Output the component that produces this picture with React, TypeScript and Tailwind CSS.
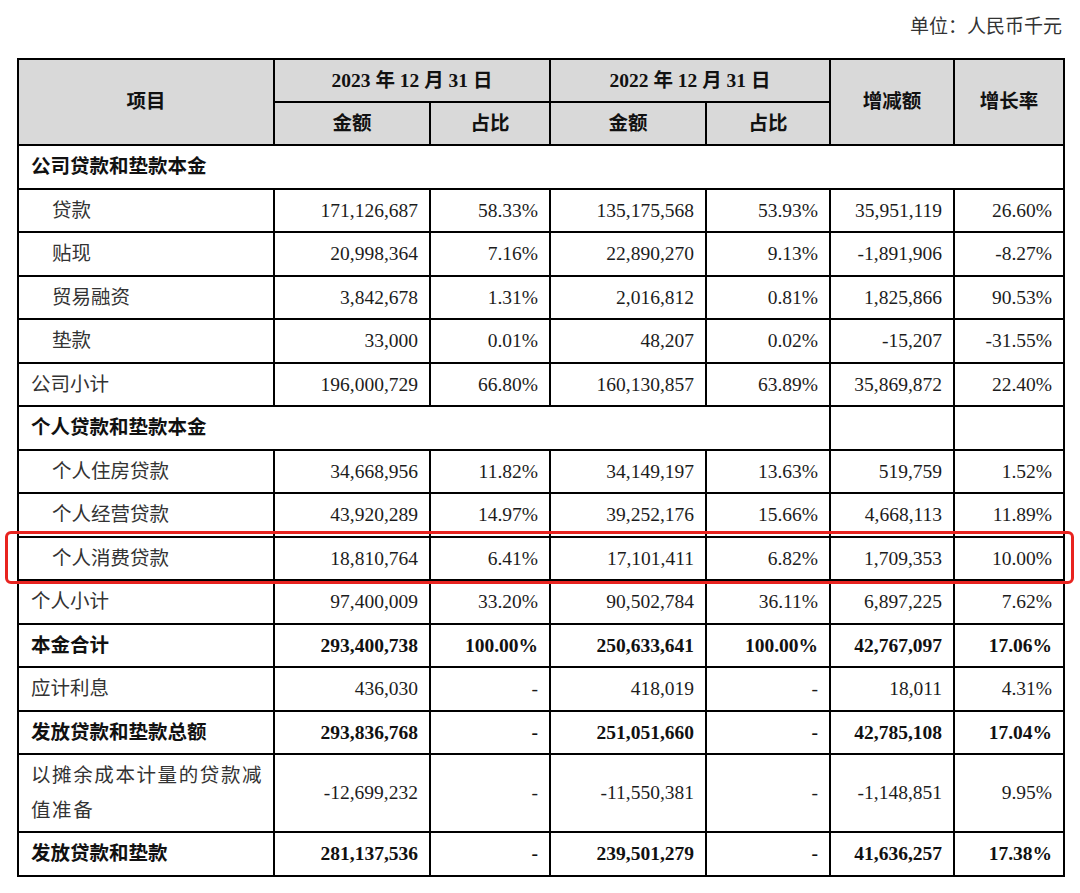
type Row = {
  label: string;
  values?: string[];
  indent?: boolean;
  bold?: boolean;
  boldLabel?: boolean;
  section?: "full" | "split";
  tall?: boolean;
};

const rows: Row[] = [
  { label: "公司贷款和垫款本金", boldLabel: true, section: "full" },
  { label: "贷款", indent: true, values: ["171,126,687", "58.33%", "135,175,568", "53.93%", "35,951,119", "26.60%"] },
  { label: "贴现", indent: true, values: ["20,998,364", "7.16%", "22,890,270", "9.13%", "-1,891,906", "-8.27%"] },
  { label: "贸易融资", indent: true, values: ["3,842,678", "1.31%", "2,016,812", "0.81%", "1,825,866", "90.53%"] },
  { label: "垫款", indent: true, values: ["33,000", "0.01%", "48,207", "0.02%", "-15,207", "-31.55%"] },
  { label: "公司小计", values: ["196,000,729", "66.80%", "160,130,857", "63.89%", "35,869,872", "22.40%"] },
  { label: "个人贷款和垫款本金", boldLabel: true, section: "split" },
  { label: "个人住房贷款", indent: true, values: ["34,668,956", "11.82%", "34,149,197", "13.63%", "519,759", "1.52%"] },
  { label: "个人经营贷款", indent: true, values: ["43,920,289", "14.97%", "39,252,176", "15.66%", "4,668,113", "11.89%"] },
  { label: "个人消费贷款", indent: true, values: ["18,810,764", "6.41%", "17,101,411", "6.82%", "1,709,353", "10.00%"] },
  { label: "个人小计", values: ["97,400,009", "33.20%", "90,502,784", "36.11%", "6,897,225", "7.62%"] },
  { label: "本金合计", bold: true, values: ["293,400,738", "100.00%", "250,633,641", "100.00%", "42,767,097", "17.06%"] },
  { label: "应计利息", values: ["436,030", "-", "418,019", "-", "18,011", "4.31%"] },
  { label: "发放贷款和垫款总额", bold: true, values: ["293,836,768", "-", "251,051,660", "-", "42,785,108", "17.04%"] },
  { label: "以摊余成本计量的贷款减值准备", tall: true, values: ["-12,699,232", "-", "-11,550,381", "-", "-1,148,851", "9.95%"] },
  { label: "发放贷款和垫款", bold: true, values: ["281,137,536", "-", "239,501,279", "-", "41,636,257", "17.38%"] },
];

const cell = "border-2 border-black align-middle";
const head = "border-2 border-black bg-[#d9d9d9] text-center font-bold text-[#111] align-middle";

export default function App() {
  return (
    <div
      className="relative w-[1080px] h-[893px] bg-white text-[#1c1c1c]"
      style={{ fontFamily: '"Liberation Serif", "Noto Sans CJK SC", serif' }}
    >
      <div className="flex justify-end pr-[18px] pt-[14px] h-[58px] text-[19px] text-[#333] leading-[26px]">
        单位：人民币千元
      </div>

      <table className="ml-[17px] w-[1046px] table-fixed border-collapse text-[19.5px] border-2 border-black">
        <colgroup>
          <col className="w-[256px]" />
          <col className="w-[156px]" />
          <col className="w-[120px]" />
          <col className="w-[156px]" />
          <col className="w-[124px]" />
          <col className="w-[124px]" />
          <col className="w-[110px]" />
        </colgroup>
        <thead>
          <tr className="h-[43px]">
            <th rowSpan={2} className={head}>项目</th>
            <th colSpan={2} className={head}>2023 年 12 月 31 日</th>
            <th colSpan={2} className={head}>2022 年 12 月 31 日</th>
            <th rowSpan={2} className={head}>增减额</th>
            <th rowSpan={2} className={head}>增长率</th>
          </tr>
          <tr className="h-[43px]">
            <th className={head}>金额</th>
            <th className={head}>占比</th>
            <th className={head}>金额</th>
            <th className={head}>占比</th>
          </tr>
        </thead>
        <tbody>
          {rows.map((r) => {
            const labelCls = `${cell} ${r.indent ? "pl-[33px]" : "pl-[12px]"} text-left ${
              r.bold || r.boldLabel ? "font-bold text-[#111]" : "text-[#333]"
            }`;
            if (r.section === "full") {
              return (
                <tr key={r.label} className="h-[43.5px]">
                  <td colSpan={7} className={labelCls}>{r.label}</td>
                </tr>
              );
            }
            if (r.section === "split") {
              return (
                <tr key={r.label} className="h-[43.5px]">
                  <td colSpan={5} className={labelCls}>{r.label}</td>
                  <td className={cell}></td>
                  <td className={cell}></td>
                </tr>
              );
            }
            return (
              <tr key={r.label} className={r.tall ? "h-[78px]" : "h-[43.5px]"}>
                <td className={labelCls}>
                  {r.tall ? (
                    <div className="leading-[35px] tracking-[1.6px]">
                      <div>以摊余成本计量的贷款减</div>
                      <div>值准备</div>
                    </div>
                  ) : (
                    r.label
                  )}
                </td>
                {r.values!.map((v, i) => (
                  <td
                    key={i}
                    className={`${cell} text-right pr-[11px] ${r.bold ? "font-bold text-[#111]" : ""}`}
                  >
                    {v}
                  </td>
                ))}
              </tr>
            );
          })}
        </tbody>
      </table>

      {/* red highlight over the consumer loan row */}
      <div className="absolute left-[5px] top-[531px] w-[1069px] h-[53px] rounded-[6px] border-[3px] border-[#e8231f] pointer-events-none" />
    </div>
  );
}
